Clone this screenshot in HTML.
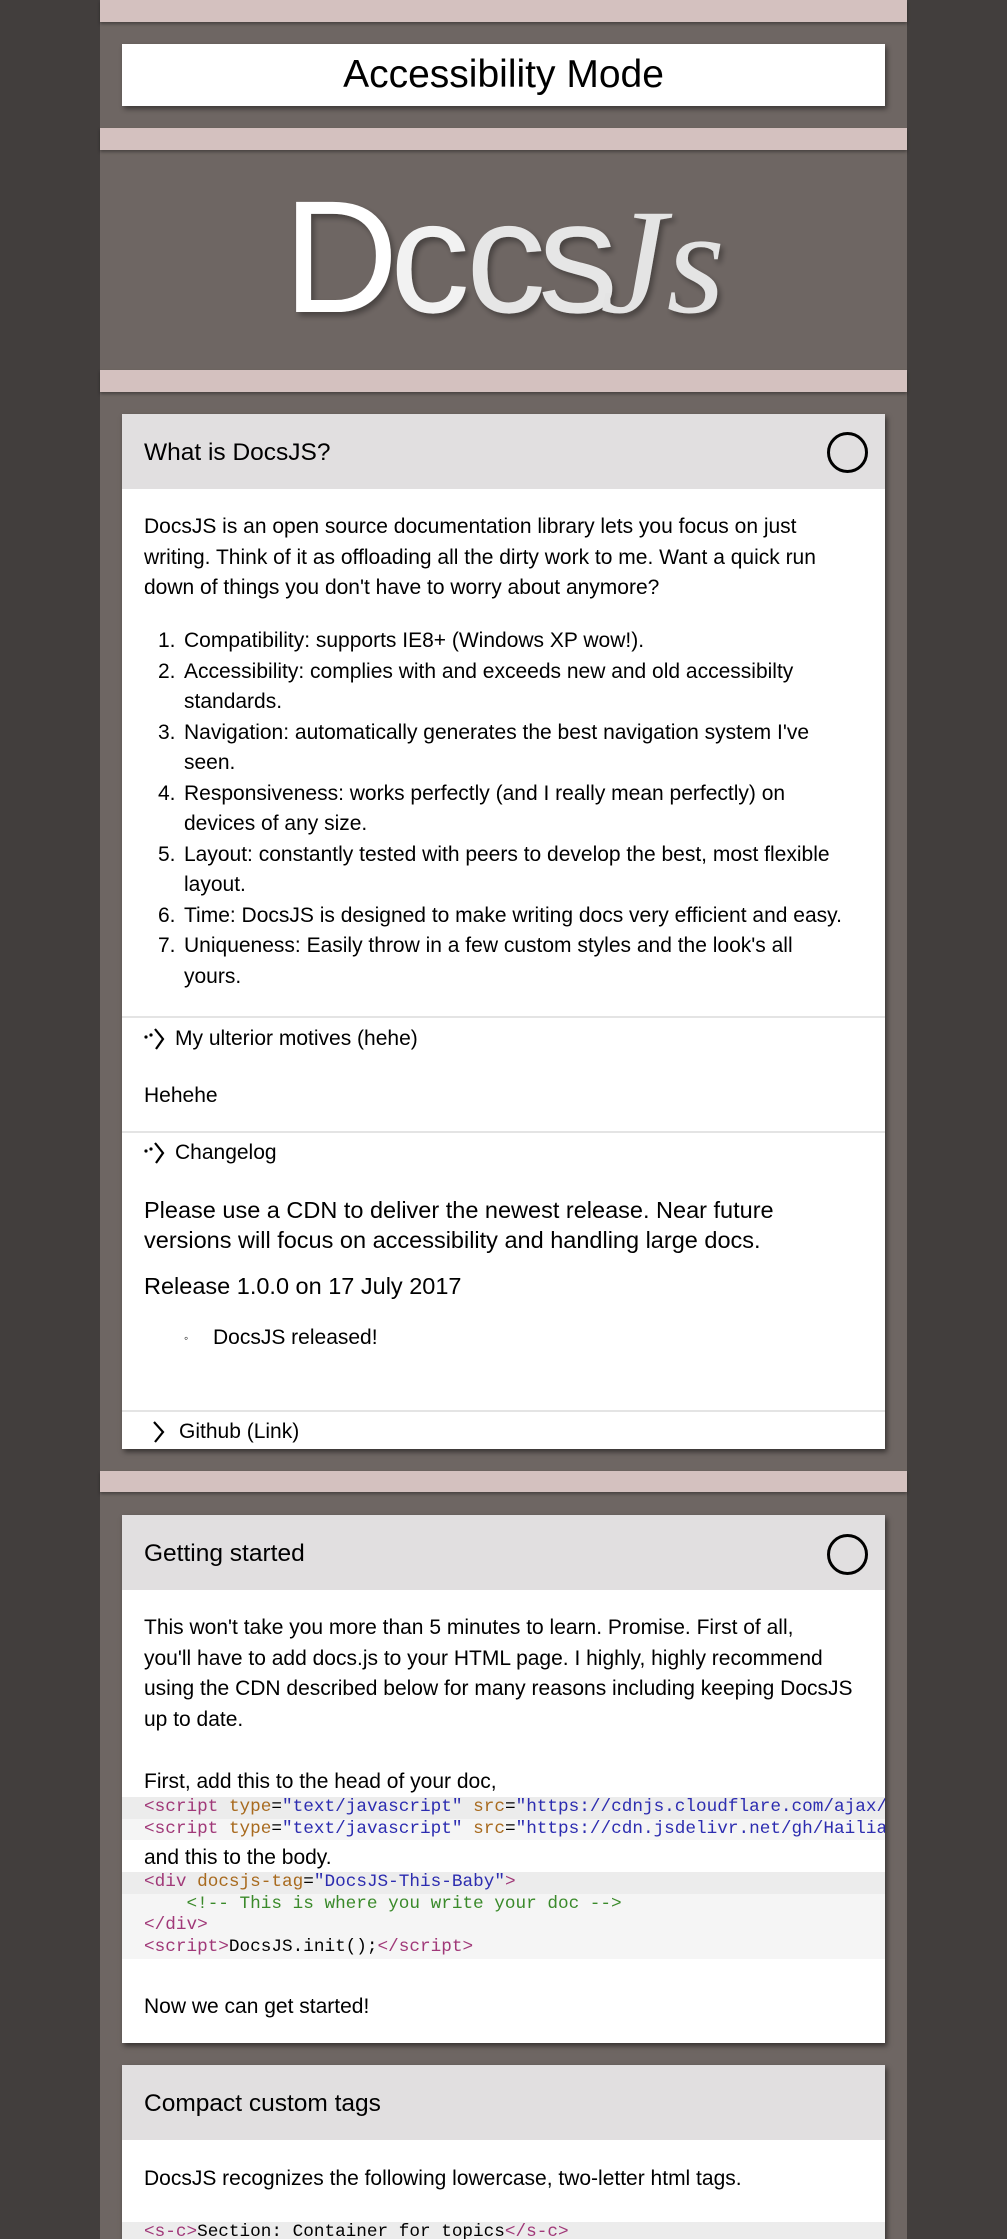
<!DOCTYPE html>
<html><head><meta charset="utf-8">
<style>
*{margin:0;padding:0;box-sizing:border-box}
html,body{width:1007px;height:2239px;overflow:hidden}
body{background:#423e3d;position:relative;font-family:"Liberation Sans",sans-serif;color:#000}
.col{position:absolute;left:100px;top:0;width:807px;height:2239px;background:#6e6663}
.band{position:absolute;left:100px;width:807px;height:22px;background:#d4c1bf;box-shadow:0 2px 3px rgba(0,0,0,.35)}
.card{position:absolute;left:122px;width:763px;background:#fff;box-shadow:2px 3px 5px rgba(0,0,0,.5);overflow:hidden}
.hdr{position:absolute;left:0;top:0;width:763px;height:75px;background:#e1dfe0}
.t{position:absolute;white-space:nowrap}
.ttl{font-size:24.5px;line-height:30px}
.circ{position:absolute;width:41px;height:41px;border:3px solid #000;border-radius:50%}
.p{font-size:21px;line-height:30.5px}
.sep{position:absolute;left:122px;width:763px;height:2px;background:#e4e4e4}
.code{position:absolute;left:122px;width:763px;overflow:hidden;font-family:"Liberation Mono",monospace;font-size:17.7px;white-space:pre}
.code div{padding-left:22px;height:21.7px;line-height:21.7px;background:#f5f5f5}
.code div.d{background:#ececec}
.tg{color:#a03878}.at{color:#a86a1e}.st{color:#2c2cb0}.cm{color:#3a8a2a}
</style></head><body>
<div class="col"></div>
<div class="band" style="top:0"></div>
<div class="card" style="top:44px;height:62px;box-shadow:2px 3px 5px rgba(0,0,0,.45)">
<div class="t" style="left:0;width:763px;text-align:center;top:8px;font-size:39px;line-height:46px">Accessibility Mode</div>
</div>
<div class="band" style="top:128px"></div>
<svg style="position:absolute;left:100px;top:150px" width="807" height="220" viewBox="100 150 807 220">
<defs><filter id="sh" x="-10%" y="-10%" width="130%" height="130%"><feDropShadow dx="3" dy="4" stdDeviation="3" flood-color="#000" flood-opacity=".35"/></filter></defs>
<g filter="url(#sh)" font-family="Liberation Sans, sans-serif" font-size="160">
<text x="283" y="312" fill="#ffffff">D</text>
<text x="390" y="312" fill="#f2f2f2">c</text>
<text x="466" y="312" fill="#e6e6e6">c</text>
<text x="538" y="312" fill="#e6e6e6">s</text>
<text x="600" y="312" fill="#e4e4e4" font-family="Liberation Serif, serif" font-style="italic" font-size="150">Js</text>
</g>
</svg>
<div class="band" style="top:370px"></div>

<!-- card 1 -->
<div class="card" style="top:414px;height:1035px"><div class="hdr"></div></div>
<div class="t ttl" style="left:144px;top:438px">What is DocsJS?</div>
<div class="circ" style="left:827px;top:432px"></div>
<div class="t p" style="left:144px;top:512px">DocsJS is an open source documentation library lets you focus on just<br>writing. Think of it as offloading all the dirty work to me. Want a quick run<br>down of things you don't have to worry about anymore?</div>
<div class="t p" style="left:158px;top:626px">1.<br>2.<br><br>3.<br><br>4.<br><br>5.<br><br>6.<br>7.</div>
<div class="t p" style="left:184px;top:626px">Compatibility: supports IE8+ (Windows XP wow!).<br>Accessibility: complies with and exceeds new and old accessibilty<br>standards.<br>Navigation: automatically generates the best navigation system I've<br>seen.<br>Responsiveness: works perfectly (and I really mean perfectly) on<br>devices of any size.<br>Layout: constantly tested with peers to develop the best, most flexible<br>layout.<br>Time: DocsJS is designed to make writing docs very efficient and easy.<br>Uniqueness: Easily throw in a few custom styles and the look's all<br>yours.</div>
<div class="sep" style="top:1016px"></div>
<svg style="position:absolute;left:142px;top:1027px" width="26" height="24" viewBox="0 0 26 24"><circle cx="4" cy="10" r="1.6"/><circle cx="9" cy="8" r="1.6"/><path d="M13 2 L21 12 L14 22" fill="none" stroke="#000" stroke-width="2.2"/></svg>
<div class="t p" style="left:175px;top:1024px">My ulterior motives (hehe)</div>
<div class="t p" style="left:144px;top:1081px">Hehehe</div>
<div class="sep" style="top:1131px"></div>
<svg style="position:absolute;left:142px;top:1141px" width="26" height="24" viewBox="0 0 26 24"><circle cx="4" cy="10" r="1.6"/><circle cx="9" cy="8" r="1.6"/><path d="M13 2 L21 12 L14 22" fill="none" stroke="#000" stroke-width="2.2"/></svg>
<div class="t p" style="left:175px;top:1138px">Changelog</div>
<div class="t" style="left:144px;top:1195px;font-size:23.5px;line-height:30px">Please use a CDN to deliver the newest release. Near future<br>versions will focus on accessibility and handling large docs.</div>
<div class="t" style="left:144px;top:1271px;font-size:23.5px;line-height:30px">Release 1.0.0 on 17 July 2017</div>
<div class="t" style="left:184px;top:1326px;font-size:12px;line-height:24px">◦</div>
<div class="t p" style="left:213px;top:1323px">DocsJS released!</div>
<div class="sep" style="top:1410px"></div>
<svg style="position:absolute;left:150px;top:1420px" width="20" height="24" viewBox="0 0 20 24"><path d="M4 2 L13 12 L5 22" fill="none" stroke="#000" stroke-width="2.2"/></svg>
<div class="t p" style="left:179px;top:1417px">Github (Link)</div>

<div class="band" style="top:1471px;height:21px"></div>

<!-- card 2 -->
<div class="card" style="top:1515px;height:528px"><div class="hdr"></div></div>
<div class="t ttl" style="left:144px;top:1539px">Getting started</div>
<div class="circ" style="left:827px;top:1534px"></div>
<div class="t p" style="left:144px;top:1613px">This won't take you more than 5 minutes to learn. Promise. First of all,<br>you'll have to add docs.js to your HTML page. I highly, highly recommend<br>using the CDN described below for many reasons including keeping DocsJS<br>up to date.</div>
<div class="t p" style="left:144px;top:1767px">First, add this to the head of your doc,</div>
<div class="code" style="top:1797px"><div class="d"><span class="tg">&lt;script</span> <span class="at">type</span>=<span class="st">"text/javascript"</span> <span class="at">src</span>=<span class="st">"https://cdnjs.cloudflare.com/ajax/libs/docsjs/1.0.0/docs.min.js"</span><span class="tg">&gt;&lt;/script&gt;</span></div><div><span class="tg">&lt;script</span> <span class="at">type</span>=<span class="st">"text/javascript"</span> <span class="at">src</span>=<span class="st">"https://cdn.jsdelivr.net/gh/HailiangWang/DocsJS/docs.min.js"</span><span class="tg">&gt;&lt;/script&gt;</span></div></div>
<div class="t p" style="left:144px;top:1843px">and this to the body.</div>
<div class="code" style="top:1872px"><div class="d"><span class="tg">&lt;div</span> <span class="at">docsjs-tag</span>=<span class="st">"DocsJS-This-Baby"</span><span class="tg">&gt;</span></div><div>    <span class="cm">&lt;!-- This is where you write your doc --&gt;</span></div><div><span class="tg">&lt;/div&gt;</span></div><div><span class="tg">&lt;script&gt;</span>DocsJS.init();<span class="tg">&lt;/script&gt;</span></div></div>
<div class="t p" style="left:144px;top:1992px">Now we can get started!</div>

<!-- card 3 -->
<div class="card" style="top:2065px;height:200px"><div class="hdr"></div></div>
<div class="t ttl" style="left:144px;top:2089px">Compact custom tags</div>
<div class="t p" style="left:144px;top:2164px">DocsJS recognizes the following lowercase, two-letter html tags.</div>
<div class="code" style="top:2222px"><div class="d"><span class="tg">&lt;s-c&gt;</span>Section: Container for topics<span class="tg">&lt;/s-c&gt;</span></div></div>
</body></html>
